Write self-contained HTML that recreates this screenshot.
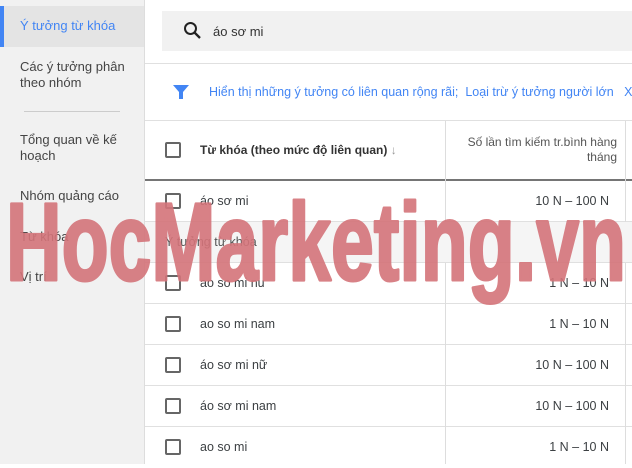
<!DOCTYPE html>
<html><head><meta charset="utf-8"><style>
*{margin:0;padding:0;box-sizing:border-box}
body{width:632px;height:464px;overflow:hidden;background:#fff;font-family:"Liberation Sans",Arial,sans-serif;position:relative;color:#3c4043}
.side{position:absolute;left:0;top:0;width:145px;height:464px;background:#f1f1f1;border-right:1px solid #ddd}
.side .t{position:absolute;left:20px;font-size:13px;line-height:16px;color:#444}
.act{position:absolute;left:0;top:6px;width:144px;height:41px;background:#e4e4e4;border-left:4px solid #4285f4}
.sep{position:absolute;left:24px;top:111px;width:96px;height:1px;background:#ccc}
.abs{position:absolute}
.cb{position:absolute;left:165px;width:16px;height:16px;border:2px solid #666;border-radius:2px}
.row{position:absolute;left:145px;width:487px;height:41px;border-bottom:1px solid #e0e0e0;font-size:12.5px}
.row .k{position:absolute;left:55px;top:13px;color:#3c4043}
.row .v{position:absolute;right:23px;top:13px;color:#3c4043}
.vl{position:absolute;width:1px;background:#ddd}
</style></head><body>
<div class="side">
<div class="act"></div>
<div class="t" style="top:18px;color:#4285f4">Ý tưởng từ khóa</div>
<div class="t" style="top:59px">Các ý tưởng phân<br>theo nhóm</div>
<div class="sep"></div>
<div class="t" style="top:132px">Tổng quan về kế<br>hoạch</div>
<div class="t" style="top:188px">Nhóm quảng cáo</div>
<div class="t" style="top:229px">Từ khóa</div>
<div class="t" style="top:269px">Vị trí</div>
</div>
<div class="abs" style="left:162px;top:11px;width:470px;height:40px;background:#f1f1f1"></div>
<svg class="abs" style="left:183px;top:21px" width="20" height="20" viewBox="0 0 20 20"><circle cx="7.5" cy="7.5" r="5.5" fill="none" stroke="#222" stroke-width="2"/><path d="M11.5 11.5L17 17" stroke="#222" stroke-width="2.3"/></svg>
<div class="abs" style="left:213px;top:24px;font-size:13px;color:#333">áo sơ mi</div>
<div class="abs" style="left:145px;top:63px;width:487px;height:1px;background:#e0e0e0"></div>
<svg class="abs" style="left:172px;top:83px" width="18" height="18" viewBox="0 0 18 18"><path d="M1 2h16l-6 7v7h-4v-7z" fill="#4285f4"/></svg>
<div class="abs" style="left:209px;top:85px;font-size:12.5px;color:#4285f4;white-space:nowrap">Hiển thị những ý tưởng có liên quan rộng rãi;&nbsp; Loại trừ ý tưởng người lớn &nbsp;&nbsp;X</div>
<div class="abs" style="left:145px;top:120px;width:487px;height:1px;background:#e0e0e0"></div>
<div class="cb" style="top:142px"></div>
<div class="abs" style="left:200px;top:143px;font-size:12px;font-weight:bold;color:#333">Từ khóa (theo mức độ liên quan) <span style="font-weight:normal;color:#999">↓</span></div>
<div class="abs" style="left:450px;top:135px;width:167px;text-align:right;font-size:12px;line-height:15px;color:#555">Số lần tìm kiếm tr.bình hàng<br>tháng</div>
<div class="abs" style="left:145px;top:179px;width:487px;height:2px;background:#757575"></div>
<div class="row" style="top:181px"><span class="k">áo sơ mi</span><span class="v">10 N – 100 N</span></div>
<div class="row" style="top:222px;background:#f5f5f5"><span class="k" style="left:20px;color:#555">Ý tưởng từ khóa</span></div>
<div class="row" style="top:263px"><span class="k">ao so mi nu</span><span class="v">1 N – 10 N</span></div>
<div class="row" style="top:304px"><span class="k">ao so mi nam</span><span class="v">1 N – 10 N</span></div>
<div class="row" style="top:345px"><span class="k">áo sơ mi nữ</span><span class="v">10 N – 100 N</span></div>
<div class="row" style="top:386px"><span class="k">áo sơ mi nam</span><span class="v">10 N – 100 N</span></div>
<div class="row" style="top:427px;border:none"><span class="k">ao so mi</span><span class="v">1 N – 10 N</span></div>
<div class="cb" style="top:193px"></div>
<div class="cb" style="top:275px"></div>
<div class="cb" style="top:316px"></div>
<div class="cb" style="top:357px"></div>
<div class="cb" style="top:398px"></div>
<div class="cb" style="top:439px"></div>
<div class="vl" style="left:445px;top:121px;height:101px"></div>
<div class="vl" style="left:445px;top:263px;height:201px"></div>
<div class="vl" style="left:625px;top:121px;height:101px"></div>
<div class="vl" style="left:625px;top:263px;height:201px"></div>
<svg class="abs" style="left:0;top:0" width="632" height="464"><g opacity="0.9"><text x="6" y="280" textLength="620" lengthAdjust="spacingAndGlyphs" font-family="Liberation Sans" font-weight="bold" font-size="110" fill="#d4747a" stroke="#d4747a" stroke-width="3" stroke-linejoin="round">HocMarketing.vn</text></g></svg>
</body></html>
